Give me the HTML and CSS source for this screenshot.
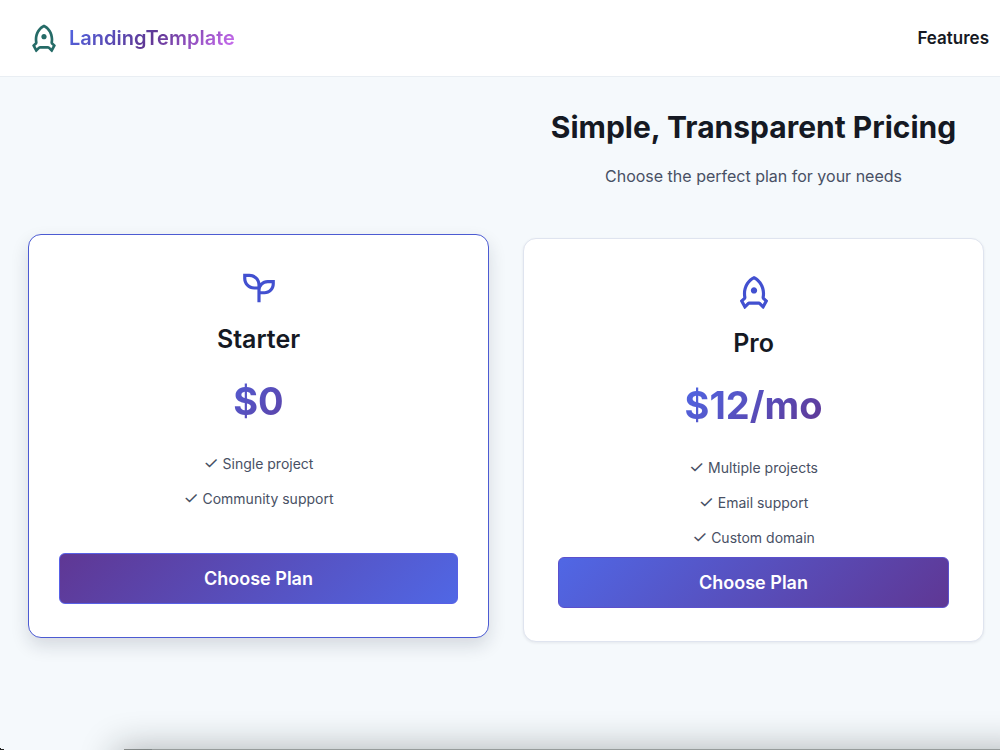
FILE: index.html
```html
<!DOCTYPE html>
<html lang="en">
<head>
<meta charset="utf-8">
<meta name="viewport" content="width=device-width, initial-scale=1">
<title>LandingTemplate</title>
<link rel="stylesheet" href="styles.css">
</head>
<body>
<svg class="sprite" aria-hidden="true">
  <symbol id="rocket" viewBox="0 0 24 24"><path d="M4.99958 12.9999C4.99958 7.91198 7.90222 3.56348 11.9996 1.81787C16.0969 3.56348 18.9996 7.91198 18.9996 12.9999C18.9996 13.8229 18.9236 14.6264 18.779 15.4027L20.7194 17.2353C20.8845 17.3913 20.9238 17.6389 20.815 17.8383L18.3196 22.4133C18.1873 22.6557 17.8836 22.7451 17.6412 22.6128C17.5993 22.59 17.5608 22.5612 17.5271 22.5275L15.2925 20.2928C15.1049 20.1053 14.8506 19.9999 14.5854 19.9999H9.41379C9.14857 19.9999 8.89422 20.1053 8.70668 20.2928L6.47209 22.5274C6.27683 22.7227 5.96025 22.7227 5.76498 22.5274C5.73122 22.4937 5.70246 22.4552 5.67959 22.4133L3.18412 17.8383C3.07537 17.6389 3.11464 17.3913 3.27975 17.2353L5.22014 15.4027C5.07551 14.6264 4.99958 13.8229 4.99958 12.9999ZM6.47542 19.6957L7.29247 18.8786C7.85508 18.316 8.61814 17.9999 9.41379 17.9999H14.5854C15.381 17.9999 16.1441 18.316 16.7067 18.8786L17.5237 19.6957L18.5056 17.8955L17.4058 16.8568C16.9117 16.3901 16.6884 15.7045 16.8128 15.0364C16.9366 14.3722 16.9996 13.6911 16.9996 12.9999C16.9996 9.13037 15.0045 5.69965 11.9996 4.04033C8.99462 5.69965 6.99958 9.13037 6.99958 12.9999C6.99958 13.6911 7.06251 14.3722 7.18631 15.0364C7.31078 15.7045 7.08746 16.3901 6.59338 16.8568L5.49353 17.8955L6.47542 19.6957ZM11.9996 12.9999C10.895 12.9999 9.99958 12.1045 9.99958 10.9999C9.99958 9.89537 10.895 8.99994 11.9996 8.99994C13.1041 8.99994 13.9996 9.89537 13.9996 10.9999C13.9996 12.1045 13.1041 12.9999 11.9996 12.9999Z"/></symbol>
  <symbol id="seedling" viewBox="0 0 24 24"><path d="M5.99805 3C9.48787 3 12.3812 5.55379 12.9112 8.89449C14.0863 7.72433 15.7076 7 17.498 7H21.998V9.5C21.998 13.0899 19.0879 16 15.498 16H12.998V21H10.998V13H8.99805C5.13205 13 1.99805 9.86599 1.99805 6V3H5.99805ZM19.998 9H17.498C15.0128 9 12.998 11.0147 12.998 13.5V14H15.498C17.9833 14 19.998 11.9853 19.998 9.5V9ZM5.99805 5H3.99805V6C3.99805 8.76142 6.23662 11 8.99805 11H10.998V10C10.998 7.23858 8.75947 5 5.99805 5Z"/></symbol>
</svg>
<header class="header">
  <a class="brand" href="#">
    <svg class="brand-icon" aria-hidden="true"><use href="#rocket"/></svg>
    <span class="brand-name">LandingTemplate</span>
  </a>
  <nav><a class="nav-link" href="#features">Features</a></nav>
</header>
<main class="pricing">
  <div class="intro">
    <h1 class="title">Simple, Transparent Pricing</h1>
    <p class="subtitle">Choose the perfect plan for your needs</p>
  </div>
  <section class="card card-active">
    <svg class="card-icon" aria-hidden="true"><use href="#seedling"/></svg>
    <h2 class="plan">Starter</h2>
    <p class="price">$0</p>
    <ul class="perks">
      <li><span class="tick">✓</span> Single project</li>
      <li><span class="tick">✓</span> Community support</li>
    </ul>
    <button class="choose" type="button">Choose Plan</button>
  </section>
  <section class="card">
    <svg class="card-icon" aria-hidden="true"><use href="#rocket"/></svg>
    <h2 class="plan">Pro</h2>
    <p class="price">$12/mo</p>
    <ul class="perks">
      <li><span class="tick">✓</span> Multiple projects</li>
      <li><span class="tick">✓</span> Email support</li>
      <li><span class="tick">✓</span> Custom domain</li>
    </ul>
    <button class="choose" type="button">Choose Plan</button>
  </section>
</main>
<div class="dock"></div>
<div class="corner"></div>
</body>
</html>
```
FILE: styles.css
```css
* { box-sizing: border-box; }
body {
  position: relative;
  margin: 0;
  min-height: 100vh;
  overflow: hidden;
  background: #f5f9fc;
  color: #151923;
  font-family: Inter, "Liberation Sans", sans-serif;
}
h1, h2, p, ul { margin: 0; padding: 0; }
.sprite { position: absolute; width: 0; height: 0; }
.header {
  display: flex;
  align-items: center;
  justify-content: space-between;
  height: 77px;
  padding: 0 11px 0 28px;
  background: #fff;
  border-bottom: 1px solid #e9eef3;
}
.brand {
  display: flex;
  align-items: center;
  gap: 9px;
  text-decoration: none;
}
.brand-icon { width: 32px; height: 32px; fill: #256b67; }
.brand-name {
  font-size: 20px;
  font-weight: 600;
  line-height: 28px;
  color: transparent;
  background: linear-gradient(135deg, #5067e5, #5f3794 50%, #d070f5);
  -webkit-background-clip: text;
  background-clip: text;
}
.nav-link {
  color: #151923;
  font-size: 17px;
  font-weight: 600;
  text-decoration: none;
}
.pricing {
  display: grid;
  grid-template-columns: 1fr 1fr;
  column-gap: 34px;
  padding: 29px 16px 0 28px;
}
.intro {
  grid-column: 2;
  padding-bottom: 49px;
  text-align: center;
}
.title {
  font-size: 30px;
  font-weight: 700;
  line-height: 42px;
  white-space: nowrap;
}
.subtitle {
  margin-top: 15px;
  color: #485064;
  font-size: 16px;
  line-height: 26px;
}
.card {
  display: flex;
  flex-direction: column;
  align-items: center;
  min-height: 404px;
  padding: 34px 34px 33px;
  background: #fff;
  border: 1px solid #dfe4ef;
  border-radius: 13px;
  box-shadow: 0 1px 3px rgba(20, 30, 50, .08);
}
.card-active {
  padding: 34px 30px 33px;
  border-color: #4c5bd2;
  box-shadow: 0 8px 18px rgba(20, 30, 50, .14);
  transform: translateY(-4px);
}
.card-icon { width: 38px; height: 38px; fill: #4250d0; flex: none; }
.plan {
  margin-top: 17px;
  font-size: 25px;
  font-weight: 600;
  line-height: 30px;
}
.price {
  min-width: 136px;
  margin-top: 24px;
  text-align: center;
  font-size: 38px;
  font-weight: 700;
  line-height: 46px;
  color: transparent;
  background: linear-gradient(135deg, #5067e5, #5f3794);
  -webkit-background-clip: text;
  background-clip: text;
}
.perks {
  display: grid;
  gap: 11px;
  margin-top: 28px;
  color: #485064;
  font-size: 14px;
  line-height: 24px;
  text-align: center;
  list-style: none;
}
.tick {
  font-size: 17px;
  line-height: 1;
}
.choose {
  width: 100%;
  height: 51px;
  margin-top: auto;
  border: 1px solid #5b50cc;
  border-radius: 6px;
  background: linear-gradient(135deg, #5067e5, #5f3794);
  color: #fff;
  font: 600 18px/24px Inter, "Liberation Sans", sans-serif;
}
.card-active .choose {
  border-color: #5860e6;
  background: linear-gradient(135deg, #5f3794, #5067e5);
}
.dock {
  position: absolute;
  right: 0;
  bottom: 0;
  left: 124px;
  height: 1px;
  background: #969b9b;
}
.dock::before {
  content: "";
  position: absolute;
  inset: 0 0 0 28px;
  box-shadow: 0 36px 36px 36px rgba(20, 25, 25, .32);
}
.corner {
  position: absolute;
  bottom: 0;
  left: 0;
  width: 6px;
  height: 2px;
  background: linear-gradient(to top right, #222 50%, transparent 50%);
}
```
